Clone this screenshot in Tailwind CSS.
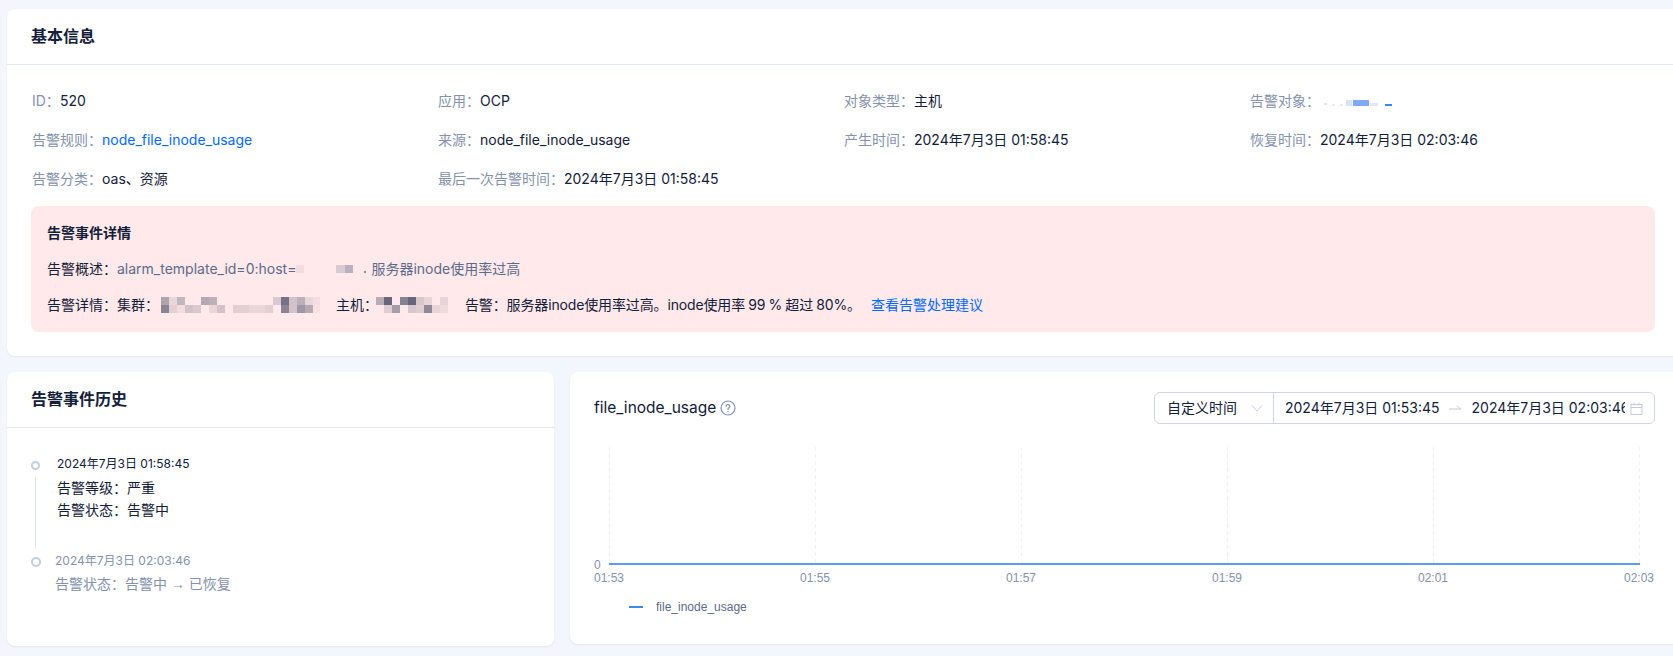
<!DOCTYPE html>
<html lang="zh-CN">
<head>
  <meta charset="UTF-8" />
  <title>告警详情</title>
  <script src="https://cdn.jsdelivr.net/npm/@tailwindcss/browser@4"></script>
</head>
<body class="bg-[#f3f6fc] text-[#132039] text-sm font-['Inter','Noto_Sans_CJK_SC',sans-serif] overflow-hidden">
  <div class="w-[1673px] h-[656px] pl-[7px] pt-[9px]">

    <!-- basic info -->
    <section class="bg-white rounded-l-lg h-[347px] shadow-[0_1px_2px_rgba(54,69,99,0.08)]">
      <h2 class="h-[56px] pl-6 pb-[2px] flex items-center text-base font-semibold border-b border-[#e2e8f3]">基本信息</h2>
      <div class="pl-6 pt-[25px]">
        <div class="pl-px grid grid-cols-[repeat(4,406px)] gap-y-[17px] leading-[22px]">
          <div><span class="text-[#8592ad]">ID：</span>520</div>
          <div><span class="text-[#8592ad]">应用：</span>OCP</div>
          <div><span class="text-[#8592ad]">对象类型：</span>主机</div>
          <div class="flex items-center">
            <span class="text-[#8592ad]">告警对象：</span>
            <svg width="72" height="8" class="mt-1 ml-[2px]" viewBox="0 0 72 8">
              <rect x="2" y="4" width="3" height="2" fill="#dbe5f5"/><rect x="10" y="5" width="3" height="2" fill="#e6edf8"/>
              <rect x="18" y="5" width="3" height="2" fill="#e6edf8"/><rect x="24" y="1" width="6" height="6" fill="#d5e3fb"/>
              <rect x="31" y="1" width="16" height="6" fill="#80aaf8"/><rect x="48" y="4" width="8" height="3" fill="#e0e9fa"/>
              <rect x="63" y="5" width="7" height="2" fill="#3d85f5"/>
            </svg>
          </div>
          <div><span class="text-[#8592ad]">告警规则：</span><a class="text-[#006aff]">node_file_inode_usage</a></div>
          <div><span class="text-[#8592ad]">来源：</span>node_file_inode_usage</div>
          <div><span class="text-[#8592ad]">产生时间：</span>2024年7月3日 01:58:45</div>
          <div><span class="text-[#8592ad]">恢复时间：</span>2024年7月3日 02:03:46</div>
          <div><span class="text-[#8592ad]">告警分类：</span>oas、资源</div>
          <div><span class="text-[#8592ad]">最后一次告警时间：</span>2024年7月3日 01:58:45</div>
        </div>

        <div class="mt-4 w-[1624px] h-[126px] bg-[#ffe9ea] rounded-lg pl-4 pt-4 leading-[22px]">
          <h3 class="font-semibold">告警事件详情</h3>
          <p class="mt-[14px] flex items-center">
            <span>告警概述：</span>
            <span class="text-[#5c6b8a]">alarm_template_id=0:host=</span>
            <svg width="75" height="10" viewBox="0 0 75 10">
              <rect x="0" y="1" width="8" height="8" fill="#f3dcdf"/>
              <rect x="40" y="1" width="9" height="8" fill="#d8c9d3"/><rect x="49" y="1" width="8" height="8" fill="#b7b2c2"/>
              <rect x="68" y="7" width="2" height="2" fill="#8a8fa6"/>
            </svg>
            <span class="text-[#5c6b8a]">服务器inode使用率过高</span>
          </p>
          <p class="mt-[14px] flex items-center">
            <span>告警详情：集群：</span>
            <svg width="160" height="16" viewBox="0 0 160 16" class="ml-[2px]">
              <g fill="#6d6a7e">
                <rect x="0" y="0" width="8" height="8" opacity=".55"/><rect x="8" y="0" width="8" height="8" opacity=".15"/><rect x="16" y="0" width="8" height="8" opacity=".4"/>
                <rect x="40" y="0" width="8" height="8" opacity=".5"/><rect x="48" y="0" width="8" height="8" opacity=".45"/>
                <rect x="112" y="0" width="8" height="8" opacity=".25"/><rect x="120" y="0" width="8" height="8" opacity=".95"/><rect x="128" y="0" width="8" height="8" opacity=".3"/><rect x="136" y="0" width="8" height="8" opacity=".45"/><rect x="144" y="0" width="8" height="8" opacity=".15"/><rect x="152" y="0" width="7" height="8" opacity=".08"/>
                <rect x="0" y="8" width="8" height="8" opacity=".8"/><rect x="8" y="8" width="8" height="8" opacity=".2"/><rect x="16" y="8" width="8" height="8" opacity=".1"/><rect x="24" y="8" width="8" height="8" opacity=".3"/><rect x="32" y="8" width="8" height="8" opacity=".25"/><rect x="48" y="8" width="8" height="8" opacity=".15"/><rect x="56" y="8" width="8" height="8" opacity=".3"/>
                <rect x="72" y="8" width="8" height="8" opacity=".2"/><rect x="80" y="8" width="8" height="8" opacity=".2"/><rect x="88" y="8" width="8" height="8" opacity=".15"/><rect x="96" y="8" width="8" height="8" opacity=".15"/><rect x="104" y="8" width="8" height="8" opacity=".2"/>
                <rect x="120" y="8" width="8" height="8" opacity=".8"/><rect x="128" y="8" width="8" height="8" opacity=".3"/><rect x="136" y="8" width="8" height="8" opacity=".65"/><rect x="144" y="8" width="8" height="8" opacity=".5"/><rect x="152" y="8" width="7" height="8" opacity=".06"/>
              </g>
            </svg>
            <span class="ml-[15px]">主机：</span>
            <svg width="80" height="16" viewBox="0 0 80 16" class="-ml-[2px]">
              <g fill="#5f5f74">
                <rect x="0" y="0" width="8" height="8" opacity=".45"/><rect x="8" y="0" width="8" height="8" opacity=".95"/><rect x="24" y="0" width="8" height="8" opacity=".75"/><rect x="32" y="0" width="8" height="8" opacity=".95"/><rect x="40" y="0" width="8" height="8" opacity=".25"/><rect x="48" y="0" width="8" height="8" opacity=".15"/><rect x="64" y="0" width="8" height="8" opacity=".15"/>
                <rect x="8" y="8" width="8" height="8" opacity=".2"/><rect x="16" y="8" width="8" height="8" opacity=".55"/><rect x="32" y="8" width="8" height="8" opacity=".25"/><rect x="40" y="8" width="8" height="8" opacity=".2"/><rect x="48" y="8" width="8" height="8" opacity=".7"/><rect x="56" y="8" width="8" height="8" opacity=".15"/><rect x="64" y="8" width="8" height="8" opacity=".1"/>
              </g>
            </svg>
            <span class="ml-[9px] [word-spacing:-0.6px] tracking-[-0.14px]">告警：服务器inode使用率过高。inode使用率 99 % 超过 80%。</span>
            <a class="ml-[10px] text-[#006aff]">查看告警处理建议</a>
          </p>
        </div>
      </div>
    </section>

    <div class="mt-4 flex gap-4">
      <!-- event history -->
      <section class="w-[547px] h-[274px] bg-white rounded-lg shadow-[0_1px_2px_rgba(54,69,99,0.08)]">
        <h2 class="h-[56px] pl-6 pb-[2px] flex items-center text-base font-semibold border-b border-[#e2e8f3]">告警事件历史</h2>
        <div class="pl-6 pt-[26px]">
          <div class="flex">
            <div class="w-[9px] flex flex-col items-center pt-[7px]">
              <span class="size-[9px] rounded-full border-2 border-[#c3cee3]"></span>
              <span class="w-px h-[72px] mt-[7px] bg-[#dfe5f0]"></span>
            </div>
            <div class="ml-[17px]">
              <div class="text-xs leading-5">2024年7月3日 01:58:45</div>
              <div class="mt-[3px] leading-[22px]">告警等级：严重</div>
              <div class="leading-[22px]">告警状态：告警中</div>
            </div>
          </div>
          <div class="flex mt-[2px] text-[#8592ad]">
            <div class="w-[10px] pt-[6px]">
              <span class="block size-[10px] rounded-full border-2 border-[#c3cee3]"></span>
            </div>
            <div class="ml-[14px]">
              <div class="text-xs leading-5">2024年7月3日 02:03:46</div>
              <div class="mt-[2px] leading-[22px]">告警状态：告警中<span class="font-['Liberation_Sans'] whitespace-pre"> → </span>已恢复</div>
            </div>
          </div>
        </div>
      </section>

      <!-- chart -->
      <section class="flex-1 h-[272px] bg-white rounded-l-lg shadow-[0_1px_2px_rgba(54,69,99,0.08)]">
        <div class="flex items-start justify-between pl-6 pr-[18px] pt-5">
          <div class="flex items-center h-[32px] gap-[4px]">
            <span class="text-[15.5px]">file_inode_usage</span>
            <svg width="16" height="16" viewBox="0 0 16 16" fill="none" stroke="#8592ad" stroke-width="1.2">
              <circle cx="8" cy="8" r="7"/>
              <path d="M6.2 6.3a1.8 1.8 0 1 1 2.7 1.6c-.6.3-.9.7-.9 1.3v.3" stroke-linecap="round"/>
              <circle cx="8" cy="11.5" r=".6" fill="#8592ad" stroke="none"/>
            </svg>
          </div>
          <div class="w-[501px] h-8 flex items-center border border-[#cdd5e4] rounded-md">
            <div class="w-[119px] h-full flex items-center pl-3 border-r border-[#cdd5e4]">
              <span>自定义时间</span>
              <svg class="ml-[14px]" width="12" height="12" viewBox="0 0 12 12" fill="none" stroke="#c3cbdb" stroke-width="1"><path d="M1 3.5l5 5.5 5-5.5"/></svg>
            </div>
            <div class="flex-1 flex items-center pl-[11px] min-w-0">
              <span class="whitespace-nowrap text-[#132039]">2024年7月3日 01:53:45</span>
              <svg class="ml-[9px]" width="12" height="8" viewBox="0 0 12 8" fill="none" stroke="#c3cbdb" stroke-width="1"><path d="M0 5h12M8 2l4 3"/></svg>
              <span class="ml-[11px] w-[153px] overflow-hidden whitespace-nowrap">2024年7月3日 02:03:46</span>
              <svg class="ml-[5px]" width="13" height="13" viewBox="0 0 13 13" fill="none" stroke="#c3cbdb" stroke-width="1"><rect x="1" y="2.5" width="11" height="10"/><path d="M1 5.5h11M4 .5v3M9 .5v3"/></svg>
            </div>
          </div>
        </div>
        <svg width="1103" height="200" viewBox="0 0 1103 200" class="block font-['Liberation_Sans']" font-size="12">
          <g stroke="#f0f1f5" stroke-width="1" stroke-dasharray="4 3">
            <path d="M39.5 23V140M245.500 23V140M451.500 23V140M657.500 23V140M863.500 23V140M1069.500 23V140"/>
          </g>
          <path d="M39 140H1070" stroke="#5b9bf5" stroke-width="2"/>
          <g fill="#8592ad">
            <text x="24" y="145">0</text>
            <text x="39" y="158" text-anchor="middle">01:53</text>
            <text x="245" y="158" text-anchor="middle">01:55</text>
            <text x="451" y="158" text-anchor="middle">01:57</text>
            <text x="657" y="158" text-anchor="middle">01:59</text>
            <text x="863" y="158" text-anchor="middle">02:01</text>
            <text x="1069" y="158" text-anchor="middle">02:03</text>
          </g>
          <path d="M59 183H73" stroke="#3e8bf0" stroke-width="2"/>
          <text x="86" y="187" fill="#5c6b8a">file_inode_usage</text>
        </svg>
      </section>
    </div>
  </div>
</body>
</html>
